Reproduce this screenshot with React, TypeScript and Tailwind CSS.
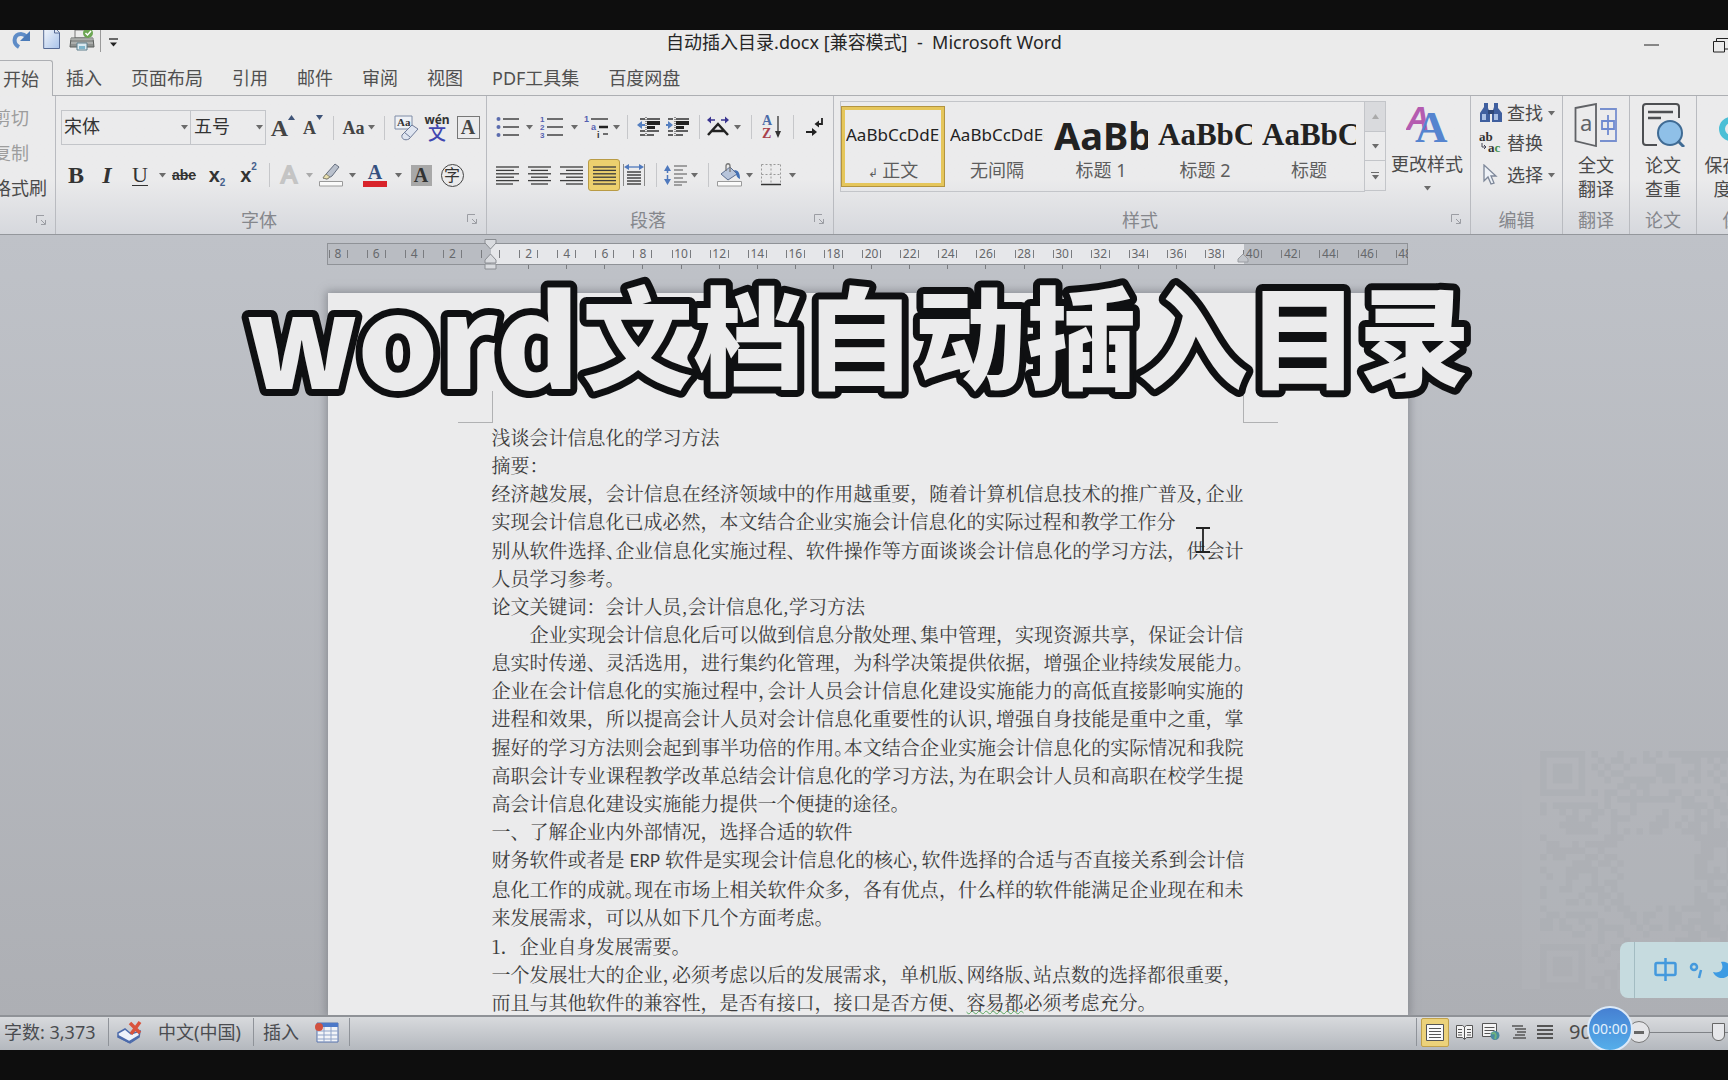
import type { ReactNode } from 'react';
import clsx from 'clsx';

const tabs = ['插入', '页面布局', '引用', '邮件', '审阅', '视图', 'PDF工具集', '百度网盘'];

// "~" marks a punctuation mark that is set at half width
const paragraphs: { text: string; full?: boolean }[][] = [
  [{ text: '浅谈会计信息化的学习方法' }],
  [{ text: '摘要：' }],
  [
    { text: '经济越发展，会计信息在经济领域中的作用越重要，随着计算机信息技术的推广普及~，企业', full: true },
    { text: '实现会计信息化已成必然，本文结合企业实施会计信息化的实际过程和教学工作分' },
  ],
  [
    { text: '别从软件选择~、企业信息化实施过程、软件操作等方面谈谈会计信息化的学习方法，供会计', full: true },
    { text: '人员学习参考。' },
  ],
  [{ text: '论文关键词：会计人员,会计信息化,学习方法' }],
  [
    { text: '　　企业实现会计信息化后可以做到信息分散处理~、集中管理，实现资源共享，保证会计信', full: true },
    { text: '息实时传递、灵活选用，进行集约化管理，为科学决策提供依据，增强企业持续发展能力~。', full: true },
    { text: '企业在会计信息化的实施过程中~，会计人员会计信息化建设实施能力的高低直接影响实施的', full: true },
    { text: '进程和效果，所以提高会计人员对会计信息化重要性的认识~，增强自身技能是重中之重，掌', full: true },
    { text: '握好的学习方法则会起到事半功倍的作用~。本文结合企业实施会计信息化的实际情况和我院', full: true },
    { text: '高职会计专业课程教学改革总结会计信息化的学习方法~，为在职会计人员和高职在校学生提', full: true },
    { text: '高会计信息化建设实施能力提供一个便捷的途径。' },
  ],
  [{ text: '一、了解企业内外部情况，选择合适的软件' }],
  [
    { text: '财务软件或者是 =ERP= 软件是实现会计信息化的核心~，软件选择的合适与否直接关系到会计信', full: true },
    { text: '息化工作的成就~。现在市场上相关软件众多，各有优点，什么样的软件能满足企业现在和未', full: true },
    { text: '来发展需求，可以从如下几个方面考虑。' },
  ],
  [{ text: '1．企业自身发展需要。' }],
  [
    { text: '一个发展壮大的企业~，必须考虑以后的发展需求，单机版~、网络版~、站点数的选择都很重要，' },
    { text: '而且与其他软件的兼容性，是否有接口，接口是否方便、_容易都_必须考虑充分。' },
  ],
];

const rulerLabels = [8, 6, 4, 2, 0, ...Array.from({ length: 24 }, (_, i) => (i + 1) * 2)];

function Line({ text, full }: { text: string; full?: boolean }) {
  const parts = text.split(/(~.|_.+?_|=.+?=)/);
  return (
    <span className={clsx('block whitespace-pre', full && '[text-align-last:justify]')}>
      {parts.map((part, i) => {
        if (part.startsWith('~')) {
          return (
            <span key={i} className="[font-feature-settings:'halt']">
              {part.slice(1)}
            </span>
          );
        }
        if (part.startsWith('_')) {
          return (
            <span key={i} className="underline decoration-[#5aa860] decoration-wavy decoration-1 underline-offset-0">
              {part.slice(1, -1)}
            </span>
          );
        }
        if (part.startsWith('=')) {
          return (
            <span key={i} className="font-['Lato',sans-serif] text-[17px]">
              {part.slice(1, -1)}
            </span>
          );
        }
        return part;
      })}
    </span>
  );
}

function Arrow({ className = 'w-3' }: { className?: string }) {
  return (
    <span className={clsx('flex shrink-0 justify-center', className)}>
      <svg width="7" height="5" viewBox="0 0 7 5">
        <path d="M0 0h7L3.5 4.5z" fill="#6b6b6b" />
      </svg>
    </span>
  );
}

function Sep({ className }: { className: string }) {
  return (
    <span className={clsx('flex shrink-0 justify-center', className)}>
      <span className="h-6 w-px bg-[#c6c7ca]" />
    </span>
  );
}

function Tool({ label, className, children }: { label: string; className: string; children: ReactNode }) {
  return (
    <button type="button" aria-label={label} className={clsx('flex h-8 shrink-0 items-center justify-center', className)}>
      {children}
    </button>
  );
}

function Group({
  title,
  className,
  launcher,
  children,
}: {
  title: string;
  className: string;
  launcher?: boolean;
  children: ReactNode;
}) {
  return (
    <section className={clsx('flex shrink-0 flex-col border-r border-[#b9bbc0]', className)}>
      <div className="h-[111px]">{children}</div>
      <div
        className={clsx('relative h-7 text-center leading-7 whitespace-nowrap text-[#85878c]', launcher && 'pr-6')}
      >
        {title}
        {launcher && (
          <svg className="absolute top-2 right-2" width="11" height="11" viewBox="0 0 11 11" fill="none" stroke="#9b9da3">
            <path d="M.5 8V.5H8M5 5l4 4M9.500 5v4.500H5" />
          </svg>
        )}
      </div>
    </section>
  );
}

function Lines({ rows, width = 23 }: { rows: [number, number][]; width?: number }) {
  return (
    <svg width={width} height="19" viewBox={`0 0 ${width} 19`} stroke="#3c3c3c" strokeWidth="1.300">
      {rows.map(([x1, x2], i) => (
        <path key={i} d={`M${x1} ${1 + i * 3.4}H${x2}`} />
      ))}
    </svg>
  );
}

function TitleBar() {
  return (
    <header className="relative flex h-[30px] shrink-0 items-start">
      <div className="flex flex-1 items-start">
        <button type="button" aria-label="恢复" className="ml-3">
          <svg width="20" height="20" viewBox="0 0 20 20">
            <path d="M7 17C0 13 2 4 9 4c3 0 4 1 6 3" fill="none" stroke="#5e8cc7" strokeWidth="4" />
            <path d="M18 1v10H8z" fill="#4a7ab8" />
          </svg>
        </button>
        <button type="button" aria-label="新建" className="ml-[11px]">
          <svg width="18" height="20" viewBox="0 0 18 20">
            <defs>
              <linearGradient id="sheet" x1="0" y1="0" x2="1" y2="1">
                <stop offset="0" stopColor="#f4f7fb" />
                <stop offset="1" stopColor="#a9c3ea" />
              </linearGradient>
            </defs>
            <path d="M.7-2H12l4.500 4.500V18.500H.7z" fill="url(#sheet)" stroke="#566a94" />
            <path d="M11.500-2v5h5" fill="#dfe6f2" stroke="#566a94" />
          </svg>
        </button>
        <button type="button" aria-label="快速打印" className="ml-2">
          <svg width="26" height="21" viewBox="0 0 26 21">
            <path d="M6 0h13v8H6z" fill="#ececec" stroke="#777" />
            <path d="M2 8h22l1 9H1z" fill="#8e918f" stroke="#5b5e5c" />
            <path d="M1 9h24M2 13h22" stroke="#c7cac8" />
            <path d="M8 13h10v7H8z" fill="#dceaf0" stroke="#5f7f8c" />
            <path d="M10 16h6v3h-6z" fill="#7fb6cc" />
            <circle cx="19" cy="3" r="5" fill="#6ca653" />
            <path d="M16.500 3l2 2 3.500-4" fill="none" stroke="#fff" strokeWidth="1.500" />
          </svg>
        </button>
        <span className="ml-[5px] h-[22px] w-px bg-[#9a9a9a]" />
        <button type="button" aria-label="自定义快速访问工具栏" className="mt-2 ml-2">
          <svg width="9" height="9" viewBox="0 0 9 9">
            <path d="M0 1h9" stroke="#222" strokeWidth="1.300" />
            <path d="M1 4.500h7L4.500 8.500z" fill="#222" />
          </svg>
        </button>
      </div>
      <h1 className="text-lg leading-6 whitespace-pre text-[#262626]">自动插入目录.docx [兼容模式]  -  Microsoft Word</h1>
      <div className="flex flex-1 justify-end overflow-hidden">
        <button type="button" aria-label="最小化" className="mr-[54px] h-[30px]">
          <svg width="15" height="2" viewBox="0 0 15 2">
            <path d="M0 1h15" stroke="#222" />
          </svg>
        </button>
        <button type="button" aria-label="还原" className="h-[30px] w-[15px]">
          <svg width="15" height="16" viewBox="0 0 15 16" fill="none" stroke="#222">
            <path d="M.5 4.500h11v10.500H.5zM3.500 4.500V1.500H16M11.500 12h4" />
          </svg>
        </button>
      </div>
    </header>
  );
}

function TabBar() {
  return (
    <nav className="flex h-9 shrink-0 text-lg leading-9 text-[#505050]">
      <button type="button" className="w-[53px] rounded-tr-[3px] border-t border-r border-[#adafb3] pl-[3px] text-left">
        开始
      </button>
      <div className="flex flex-1 gap-[29px] border-b border-[#adafb3] pl-[13px]">
        {tabs.map((tab) => (
          <button key={tab} type="button" className="whitespace-nowrap">
            {tab}
          </button>
        ))}
      </div>
    </nav>
  );
}

function FontGroup() {
  return (
    <Group title="字体" className="w-[431px]" launcher>
      <div className="flex items-center pt-[14px] pl-[5px]">
        <div className="flex h-[35px] items-center border border-[#c3c5c9]">
          <select aria-label="字体" className="h-full w-[116px] appearance-none bg-transparent pb-[3px] pl-[2px] text-lg text-[#333]">
            <option>宋体</option>
          </select>
          <Arrow />
        </div>
        <div className="flex h-[35px] items-center border border-l-0 border-[#c3c5c9]">
          <select aria-label="字号" className="h-full w-[62px] appearance-none bg-transparent pb-[3px] pl-[3px] text-lg text-[#333]">
            <option>五号</option>
          </select>
          <Arrow />
        </div>
        <div className="flex items-center text-[#444]">
          <Tool label="增大字体" className="w-[34px] font-['Liberation_Serif'] text-2xl font-bold">
            A
            <svg className="mb-5" width="7" height="5" viewBox="0 0 7 5">
              <path d="M0 5h7L3.500 0z" fill="#3f5478" />
            </svg>
          </Tool>
          <Tool label="缩小字体" className="w-[26px] font-['Liberation_Serif'] text-lg font-bold">
            A
            <svg className="mb-5" width="7" height="5" viewBox="0 0 7 5">
              <path d="M0 0h7L3.500 5z" fill="#3f5478" />
            </svg>
          </Tool>
          <Sep className="w-[14px]" />
          <Tool label="更改大小写" className="w-[27px] font-['Liberation_Serif'] text-lg font-bold">
            Aa
          </Tool>
          <Arrow className="w-2" />
          <Sep className="w-[18px]" />
          <Tool label="清除格式" className="w-[26px]">
            <svg width="25" height="26" viewBox="0 0 25 26">
              <path d="M1 1h17v13H1z" fill="#eef1f6" stroke="#7f8ca6" />
              <text x="3" y="11" fontSize="11" fontFamily="Liberation Serif" fontWeight="700" fill="#333">
                Aa
              </text>
              <path d="M8 20l10-10 6 4-9 10c-4 2-8 0-7-4z" fill="#dfe5f0" stroke="#6d7a98" />
              <path d="M10 17l6 5" stroke="#6d7a98" />
            </svg>
          </Tool>
          <Tool label="拼音指南" className="w-9 flex-col">
            <span className="text-xs leading-[10px] font-bold text-[#333]">wén</span>
            <span className="text-lg leading-4 font-medium text-[#4046b0]">文</span>
          </Tool>
          <Tool label="字符边框" className="w-[26px]">
            <span className="size-[23px] border border-[#777] text-center font-['Liberation_Serif'] text-xl leading-[21px] font-bold">
              A
            </span>
          </Tool>
        </div>
      </div>
      <div className="flex items-center pt-[14px] pl-[5px] text-[#333]">
        <Tool label="加粗" className="w-[30px] font-['Liberation_Serif'] text-2xl font-bold">
          B
        </Tool>
        <Tool label="倾斜" className="w-8 font-['Liberation_Serif'] text-2xl font-bold italic">
          I
        </Tool>
        <Tool label="下划线" className="w-[34px] font-['Liberation_Serif'] text-[22px]">
          <span className="border-b border-[#333] leading-5">U</span>
        </Tool>
        <Arrow className="w-[10px]" />
        <Tool label="删除线" className="w-[34px] font-['Liberation_Sans'] text-sm font-bold line-through">
          abe
        </Tool>
        <Tool label="下标" className="w-8 font-['Liberation_Sans'] text-xl font-bold">
          x<span className="mt-4 text-[10px] text-[#44608c]">2</span>
        </Tool>
        <Tool label="上标" className="w-[31px] font-['Liberation_Sans'] text-xl font-bold">
          x<span className="mb-4 text-[10px] text-[#44608c]">2</span>
        </Tool>
        <Sep className="w-[10px]" />
        <Tool
          label="文本效果"
          className="w-[30px] font-['Liberation_Sans'] text-2xl text-[#ededed] [-webkit-text-stroke:2px_#c4c4c4]"
        >
          A
        </Tool>
        <Arrow className="w-[10px] opacity-50" />
        <Tool label="突出显示" className="w-[33px]">
          <svg width="24" height="24" viewBox="0 0 24 24">
            <path d="M4 15l4-5 8-9 4 3-7 9-5 3z" fill="#b9c0cc" stroke="#666f7f" />
            <path d="M4 15l3-4 4 3-3 2z" fill="#e9dfae" stroke="#8d8a74" />
            <path d="M.5 18.500h23v4.500H.5z" fill="#fafafa" stroke="#9a9a9a" />
          </svg>
        </Tool>
        <Arrow className="w-[10px]" />
        <Tool label="字体颜色" className="w-9 flex-col">
          <span className="font-['Liberation_Serif'] text-xl leading-[18px] font-bold text-[#35507f]">A</span>
          <span className="h-[6px] w-6 bg-[#d8232a]" />
        </Tool>
        <Arrow className="w-[10px]" />
        <Tool label="字符底纹" className="w-9">
          <span className="size-[21px] bg-[#a8a8a8] text-center font-['Liberation_Serif'] text-xl leading-[21px] font-bold">A</span>
        </Tool>
        <Tool label="带圈字符" className="w-[26px]">
          <span className="size-[23px] rounded-full border border-[#444] text-center text-base leading-5">字</span>
        </Tool>
      </div>
    </Group>
  );
}

function ParagraphGroup() {
  return (
    <Group title="段落" className="w-[347px]" launcher>
      <div className="flex items-center pt-[15px] pl-1">
        <Tool label="项目符号" className="w-8">
          <svg width="23" height="22" viewBox="0 0 23 22">
            <path d="M7 3h16M7 11h16M7 19h16" stroke="#444" strokeWidth="1.300" />
            <g fill="#5b6cae">
              <circle cx="2.500" cy="3" r="2" />
              <circle cx="2.500" cy="11" r="2" />
              <circle cx="2.500" cy="19" r="2" />
            </g>
          </svg>
        </Tool>
        <Arrow />
        <Tool label="编号" className="w-[33px]">
          <svg width="23" height="24" viewBox="0 0 23 24">
            <path d="M7 4h16M7 12h16M7 20h16" stroke="#444" strokeWidth="1.300" />
            <g fontSize="8" fontWeight="700" fontFamily="Liberation Sans" fill="#5560b0">
              <text x="0" y="7">1</text>
              <text x="0" y="15">2</text>
              <text x="0" y="23">3</text>
            </g>
          </svg>
        </Tool>
        <Arrow />
        <Tool label="多级列表" className="w-8">
          <svg width="26" height="24" viewBox="0 0 26 24">
            <path d="M8 4h17M20 19h5" stroke="#444" strokeWidth="1.500" />
            <path d="M16 12h9" stroke="#222" strokeWidth="2.500" />
            <g fontSize="9" fontWeight="700" fontFamily="Liberation Sans" fill="#5560b0">
              <text x="1" y="7">1</text>
              <text x="8" y="15">a</text>
              <text x="14" y="23" fill="#333">i</text>
            </g>
          </svg>
        </Tool>
        <Arrow className="w-2" />
        <Sep className="w-[14px]" />
        <Tool label="减少缩进量" className="w-7">
          <svg width="23" height="22" viewBox="0 0 23 22">
            <path d="M3 3h5M10 3h13M3 15h5M3 19h5M10 15h12M10 19h7" stroke="#333" strokeWidth="1.300" />
            <path d="M10 5h13v4H10zM10 10h8v3h-8z" fill="#222" />
            <path d="M9 1v20" stroke="#333" strokeDasharray="1 1" />
            <path d="M0 9l5-4v8z" fill="#557fc0" />
            <path d="M4 9h4" stroke="#557fc0" strokeWidth="2" />
          </svg>
        </Tool>
        <Tool label="增加缩进量" className="w-[31px]">
          <svg width="23" height="22" viewBox="0 0 23 22">
            <path d="M2 3h5M10 3h13M2 15h5M2 19h5M10 15h12M10 19h7" stroke="#333" strokeWidth="1.300" />
            <path d="M10 5h13v4H10zM10 10h8v3h-8z" fill="#222" />
            <path d="M9 1v20" stroke="#333" strokeDasharray="1 1" />
            <path d="M7 9L2 5v8z" fill="#557fc0" />
            <path d="M0 9h4" stroke="#557fc0" strokeWidth="2" />
          </svg>
        </Tool>
        <Sep className="w-3" />
        <Tool label="中文版式" className="w-[26px]">
          <svg width="24" height="22" viewBox="0 0 24 22">
            <path d="M1 4l4-3.500v7zM23 4l-4-3.500v7z" fill="#3a3590" />
            <path d="M3 4h6M21 4h-6" stroke="#3a3590" strokeWidth="1.500" />
            <path d="M2 19L12 8l10 11M6 15h12" fill="none" stroke="#222" strokeWidth="2.500" />
          </svg>
        </Tool>
        <Arrow />
        <Sep className="w-4" />
        <Tool label="排序" className="w-[26px]">
          <svg width="20" height="24" viewBox="0 0 20 24">
            <g fontSize="14" fontWeight="700" fontFamily="Liberation Serif">
              <text x="0" y="10" fill="#4a6ba8">A</text>
              <text x="0" y="23" fill="#a8414b">Z</text>
            </g>
            <path d="M16 1v20" stroke="#333" strokeWidth="1.300" />
            <path d="M13 16h6l-3 7z" fill="#333" />
          </svg>
        </Tool>
        <Sep className="w-4" />
        <Tool label="显示编辑标记" className="w-7">
          <svg width="18" height="22" viewBox="0 0 18 22" fill="none" stroke="#222" strokeWidth="1.800">
            <path d="M16 2v6h-5M0 16h8" />
            <path d="M13 4.500v7L8.500 8zM6 12v8l5-4z" fill="#222" stroke="none" />
          </svg>
        </Tool>
      </div>
      <div className="flex items-center pt-4 pl-1">
        <Tool label="左对齐" className="w-8">
          <Lines rows={[[0, 23], [0, 18], [0, 23], [0, 18], [0, 23], [0, 17]]} />
        </Tool>
        <Tool label="居中" className="w-8">
          <Lines rows={[[0, 23], [3, 20], [0, 23], [3, 20], [0, 23], [3, 20]]} />
        </Tool>
        <Tool label="右对齐" className="w-[33px]">
          <Lines rows={[[0, 23], [6, 23], [0, 23], [6, 23], [0, 23], [6, 23]]} />
        </Tool>
        <Tool label="两端对齐" className="w-8 rounded-[3px] border border-[#b99b45] bg-[#ecd06e]">
          <Lines rows={[[0, 23], [0, 23], [0, 23], [0, 23], [0, 23], [0, 23]]} />
        </Tool>
        <Tool label="分散对齐" className="w-7">
          <svg width="22" height="24" viewBox="0 0 22 24">
            <path d="M.5 1v22M21.500 1v22" stroke="#888" />
            <path d="M4 9h14M4 12h14M4 15h14M4 18h14M4 21h14" stroke="#444" strokeWidth="1.300" />
            <path d="M4 4h14" stroke="#4f79bd" strokeWidth="1.300" />
            <path d="M1 4l5-3v6zM21 4l-5-3v6z" fill="#4f79bd" />
          </svg>
        </Tool>
        <Sep className="w-4" />
        <Tool label="行距" className="w-6">
          <svg width="24" height="22" viewBox="0 0 24 22">
            <path d="M10 2h13M10 6h9M10 10h13M10 14h9M10 18h13M10 21h8" stroke="#555" strokeWidth="1.200" />
            <path d="M0 7l3.500-6L7 7zM0 15l3.500 6L7 15z" fill="#4f79bd" />
            <path d="M3.500 5v12" stroke="#4f79bd" strokeWidth="1.500" strokeDasharray="4 2" />
          </svg>
        </Tool>
        <Arrow />
        <Sep className="w-4" />
        <Tool label="底纹" className="w-[26px]">
          <svg width="25" height="24" viewBox="0 0 25 24">
            <path d="M4 11l9-7 7 7-9 6z" fill="#b7c4da" stroke="#5c6e90" />
            <path d="M9 8V3c0-3 4-3 4 0v6" fill="none" stroke="#777" strokeWidth="1.300" />
            <path d="M17 7c5 0 6 4 6 9-3-1-4-4-4-6z" fill="#4270b5" />
            <path d="M.5 18.500h24v4.500H.5z" fill="#fafafa" stroke="#9a9a9a" />
          </svg>
        </Tool>
        <Arrow className="w-[14px]" />
        <Tool label="边框" className="w-[30px]">
          <svg width="20" height="22" viewBox="0 0 20 22">
            <path d="M.5.5h19M.5 10.500h19M.5.5v18M10 .5v18M19.500.5v18" stroke="#999" strokeDasharray="2 2" />
            <path d="M0 20.500h20" stroke="#333" strokeWidth="1.500" />
          </svg>
        </Tool>
        <Arrow />
      </div>
    </Group>
  );
}

function StylesGroup() {
  const item = 'flex w-[104px] shrink-0 flex-col items-center px-[5px] pt-[6px]';
  const sample = 'flex h-[46px] w-full items-center overflow-hidden whitespace-nowrap text-[#222]';
  return (
    <Group title="样式" className="w-[637px]" launcher>
      <div className="flex pt-[5px] pl-[6px]">
        <div className="flex h-[91px] w-[525px] border border-[#c3c5c9] py-1 text-[#5d5d5d]">
          <button
            type="button"
            className="flex w-[104px] shrink-0 flex-col items-center border-4 border-[#e5c65b] px-px pt-[2px] outline-1 -outline-offset-1 outline-[#b39440]"
          >
            <span className={clsx(sample, 'text-[17px]')}>AaBbCcDdEe</span>
            <span className="whitespace-nowrap">
              <span className="text-xs">↲</span> 正文
            </span>
          </button>
          <button type="button" className={item}>
            <span className={clsx(sample, 'text-[17px]')}>AaBbCcDdEe</span>
            <span>无间隔</span>
          </button>
          <button type="button" className={item}>
            <span className={clsx(sample, 'text-[38px] font-bold')}>AaBbC</span>
            <span>标题 1</span>
          </button>
          <button type="button" className={item}>
            <span className={clsx(sample, "font-['Liberation_Serif'] text-[31px] font-bold")}>AaBbCc</span>
            <span>标题 2</span>
          </button>
          <button type="button" className={item}>
            <span className={clsx(sample, "font-['Liberation_Serif'] text-[31px] font-bold")}>AaBbCc</span>
            <span>标题</span>
          </button>
        </div>
        <div className="flex h-[90px] w-[21px] flex-col divide-y divide-[#c3c5c9] border border-l-0 border-[#c3c5c9]">
          <button type="button" aria-label="上一行" className="flex flex-1 items-center justify-center bg-[#d9dadd]">
            <svg width="7" height="5" viewBox="0 0 7 5">
              <path d="M0 5h7L3.500 0z" fill="#aaa" />
            </svg>
          </button>
          <button type="button" aria-label="下一行" className="flex flex-1 items-center justify-center">
            <Arrow />
          </button>
          <button type="button" aria-label="其他" className="flex flex-1 flex-col items-center justify-center gap-[2px]">
            <span className="h-px w-2 bg-[#6b6b6b]" />
            <Arrow />
          </button>
        </div>
        <button type="button" className="ml-[5px] flex w-[72px] flex-col items-center pt-[3px] whitespace-nowrap">
          <svg width="42" height="40" viewBox="0 0 42 40" fontFamily="Liberation Serif" fontWeight="700">
            <text x="0" y="26" fontSize="33" fontFamily="Liberation Sans" fill="#b45cb0" fontStyle="italic">
              A
            </text>
            <text x="9" y="38" fontSize="45" fill="#5684cf">
              A
            </text>
          </svg>
          <span className="mt-2">更改样式</span>
          <Arrow className="w-3 pt-[10px]" />
        </button>
      </div>
    </Group>
  );
}

function EditGroup() {
  return (
    <Group title="编辑" className="w-[92px]">
      <div className="flex flex-col gap-[2px] pt-[3px] pl-2 whitespace-nowrap text-[#4a4a4a]">
        <button type="button" className="flex h-7 items-center">
          <svg className="mr-1 shrink-0" width="24" height="20" viewBox="0 0 24 20">
            <path d="M5 0h4v5l2 5v9H1v-9l4-6zM15 0h4v5l4 5v9H13v-9l2-6z" fill="#3f5f9f" />
            <path d="M3 11h4v6H3zM15 11h4v6h-4z" fill="#a9bfe4" />
            <path d="M9 7h6v4H9z" fill="#2f4879" />
          </svg>
          查找
          <Arrow className="w-4" />
        </button>
        <button type="button" className="flex h-7 items-center">
          <svg className="mr-1 shrink-0" width="24" height="24" viewBox="0 0 24 24" fontFamily="Liberation Serif" fontWeight="700">
            <text x="0" y="10" fontSize="13" fill="#333">ab</text>
            <text x="9" y="21" fontSize="13" fill="#333">
              a<tspan fill="#3f8f4a">c</tspan>
            </text>
            <path d="M3 12v4h4M5 14l2 2-2 2" fill="none" stroke="#445" />
          </svg>
          替换
        </button>
        <button type="button" className="flex h-8 items-center">
          <svg className="mr-1 shrink-0" width="24" height="22" viewBox="0 0 24 22">
            <path d="M5 1v16l4-4 3 7 3-1-3-7h5z" fill="#eef2f7" stroke="#7d8799" strokeWidth="1.300" />
          </svg>
          选择
          <Arrow className="w-4" />
        </button>
      </div>
    </Group>
  );
}

function BigTool({
  title,
  first,
  second,
  className,
  children,
}: {
  title: string;
  first: string;
  second: string;
  className: string;
  children: ReactNode;
}) {
  return (
    <Group title={title} className={className}>
      <button type="button" className="flex w-full flex-col items-center pt-[7px] leading-6 whitespace-nowrap text-[#4a4a4a]">
        {children}
        <span className="mt-[6px]">{first}</span>
        <span>{second}</span>
      </button>
    </Group>
  );
}

function Ribbon() {
  return (
    <div className="flex h-[139px] shrink-0 overflow-hidden border-b border-[#94979c] bg-linear-to-b from-[#ebebec] from-60% to-[#d6d8dd] text-lg leading-6 text-[#4a4a4a]">
      <section className="w-14 shrink-0 overflow-hidden border-r border-[#b9bbc0]">
        <div className="-ml-[7px] flex h-[111px] flex-col items-start gap-[11px] pt-[10px] whitespace-nowrap">
          <button type="button" className="text-[#9d9d9d]">剪切</button>
          <button type="button" className="text-[#9d9d9d]">复制</button>
          <button type="button">格式刷</button>
        </div>
        <div className="flex h-7 justify-end pt-2 pr-2">
          <svg width="11" height="11" viewBox="0 0 11 11" fill="none" stroke="#9b9da3">
            <path d="M.5 8V.5H8M5 5l4 4M9.500 5v4.500H5" />
          </svg>
        </div>
      </section>
      <FontGroup />
      <ParagraphGroup />
      <StylesGroup />
      <EditGroup />
      <BigTool title="翻译" first="全文" second="翻译" className="w-[67px]">
        <svg width="44" height="44" viewBox="0 0 44 44" fill="none">
          <path d="M1.500 5L22 1v42L1.500 38z" stroke="#606266" strokeWidth="1.800" />
          <path d="M26 6h16v32H26" stroke="#7890cf" strokeWidth="1.800" />
          <path d="M28 18h12v8H28zM34 12v20" stroke="#6f8ad0" strokeWidth="1.800" />
          <text x="6" y="28" fontSize="22" fontFamily="Noto Sans" fill="#606266">a</text>
        </svg>
      </BigTool>
      <BigTool title="论文" first="论文" second="查重" className="w-[67px]">
        <svg width="44" height="44" viewBox="0 0 44 44" fill="none">
          <path d="M16 42H5a3 3 0 0 1-3-3V4a3 3 0 0 1 3-3h30a3 3 0 0 1 3 3v11" stroke="#4d4f52" strokeWidth="2" />
          <path d="M7 9h25M7 15h13" stroke="#4d4f52" strokeWidth="2.500" />
          <circle cx="29" cy="30" r="12" fill="#8fc0e8" stroke="#3f6b94" strokeWidth="2" />
          <path d="M37 38l6 6" stroke="#3f6b94" strokeWidth="3" />
        </svg>
      </BigTool>
      <BigTool title="保存" first="保存到百" second="度网盘" className="w-[88px]">
        <svg width="44" height="44" viewBox="0 0 44 44" fill="none">
          <circle cx="12" cy="26" r="9" stroke="#4cbfd6" strokeWidth="6" />
          <circle cx="31" cy="26" r="9" stroke="#4a8fe0" strokeWidth="6" />
        </svg>
      </BigTool>
    </div>
  );
}

function Ruler() {
  return (
    <div className="mx-auto w-[1081px] shrink-0 overflow-hidden">
      <div className="flex h-[22px] border border-[#8f9297] bg-[linear-gradient(to_right,#b9bcc2_163px,#e6e7ea_163px,#e6e7ea_916px,#b9bcc2_916px)]">
        <div className="-ml-[9px] flex w-[1105px] shrink-0 items-center">
          {rulerLabels.map((label, i) => (
            <div key={i} className="flex flex-1 justify-center">
              <span className="flex h-2 w-[19px] items-center justify-center border-x border-[#7a7c80] text-xs leading-3 text-[#66686c]">
                {label > 0 && label}
              </span>
            </div>
          ))}
        </div>
      </div>
      <div className="-ml-2 flex h-1 w-[1105px]">
        {rulerLabels.map((_, i) => (
          <div key={i} className="flex flex-1 justify-center">
            {i > 4 && i < 24 && <span className="h-full w-px bg-[#7a7c80]" />}
          </div>
        ))}
      </div>
    </div>
  );
}

function IndentMarks() {
  return (
    <>
      <svg className="absolute -top-1 left-[157px]" width="13" height="32" viewBox="0 0 13 32" fill="#d9dbdf" stroke="#8a8d92">
        <path d="M1 .5h11V4L6.500 10 1 4zM6.500 15l5.500 6v3H1v-3zM1 25h11v5H1z" />
      </svg>
      <svg className="absolute top-[10px] right-[159px]" width="12" height="10" viewBox="0 0 12 10" fill="#c3c6cb" stroke="#9a9da2">
        <path d="M6 1l5 5v3H1V6z" />
      </svg>
    </>
  );
}

function DocumentPage() {
  return (
    <article className="relative mx-auto w-[1080px] shrink-0 bg-[#ebebec] px-[164px] pt-[98px] shadow-[0_0_8px_2px_rgba(110,114,120,0.6)]">
      <div className="-mx-[34px] flex h-8 justify-between">
        <span className="w-[35px] border-r border-b border-[#b0b1b3]" />
        <span className="w-[35px] border-b border-l border-[#b0b1b3]" />
      </div>
      <div className="flex h-[592px] flex-col justify-between pt-px font-['Noto_Serif_CJK_SC','Noto_Sans_CJK_SC',sans-serif] text-[19px] leading-[26px] text-[#3c3c3c]">
        {paragraphs.map((lines, i) => (
          <p key={i} className="contents">
            {lines.map((line) => (
              <Line key={line.text} {...line} />
            ))}
          </p>
        ))}
      </div>
    </article>
  );
}

// Faint code behind the desktop corner
function WatermarkCode() {
  const cells: string[] = [];
  for (let y = 0; y < 37; y++) {
    for (let x = 0; x < 30; x++) {
      const finder = x < 8 && (y < 8 || y > 28);
      const logo = x > 12 && x < 24 && y > 12 && y < 24;
      const n = Math.abs(Math.sin(x * 12.9898 + y * 78.233) * 43758.5453) % 1;
      if (!finder && !logo && n > 0.5) cells.push(`M${x} ${y}h1v1h-1z`);
    }
  }
  return (
    <div className="absolute top-[500px] right-0 w-[206px] bg-[#b5b7bb]/40 pt-4 pl-[18px]">
      <svg width="188" height="238" viewBox="0 0 29.200 37" fill="#a9acb1" opacity="0.4">
        <path d={cells.join('')} />
        {[0, 30].map((y) => (
          <path key={y} fillRule="evenodd" d={`M0 ${y}h7v7h-7zM1 ${y + 1}v5h5v-5zM2 ${y + 2}h3v3h-3z`} />
        ))}
      </svg>
    </div>
  );
}

function ImeBar() {
  return (
    <div className="absolute right-0 bottom-[17px] flex h-14 w-[108px] items-center rounded-l-lg bg-[#c6dbdf]">
      <span className="ml-[14px] h-full w-px bg-[#a3bcc2]" />
      <svg className="ml-[19px]" width="74" height="24" viewBox="0 0 74 24" fill="none" stroke="#4499dd" strokeWidth="2.500">
        <rect x="1.500" y="5" width="20" height="12" rx="1.500" />
        <path d="M11.500 0v23" />
        <circle cx="40" cy="9" r="3" />
        <path d="M47 12l-2 8" />
        <path d="M67 4c4 7-1 12-8 10 4 9 17 8 18-3 0-4-4-8-10-7z" fill="#3d9be3" stroke="none" />
      </svg>
    </div>
  );
}

// Outlined title lettering
function Headline() {
  return (
    <h2 className="absolute top-[34px] left-[230px]">
      <svg
        width="1270"
        height="150"
        viewBox="0 0 1270 150"
        className="font-['Noto_Sans_CJK_SC',sans-serif]"
        fill="#ebebec"
        stroke="#0f1012"
        strokeWidth="14"
        strokeLinejoin="round"
        paintOrder="stroke"
      >
        <text x="15" y="120" fontSize="127" fontWeight="900">
          word
        </text>
        <text x="352" y="112" fontSize="111" fontWeight="900">
          文档自动插入目录
        </text>
      </svg>
    </h2>
  );
}

function StatusBar() {
  const divider = 'h-7 w-px bg-[#8f9399]';
  return (
    <footer className="relative flex h-[35px] shrink-0 items-center border-t-2 border-[#8f9297] bg-linear-to-b from-[#d8dadd] to-[#b4b8be] pb-[3px] text-lg text-[#4a4c50]">
      <button type="button" className="ml-1 w-[104px] text-left whitespace-nowrap">字数: 3,373</button>
      <span className={divider} />
      <button type="button" aria-label="校对" className="ml-2">
        <svg width="25" height="24" viewBox="0 0 25 24">
          <path d="M1 13l7-4 6 5 9-3-1 6-9 6-12-6z" fill="#eef2fa" stroke="#4c6bab" strokeWidth="1.500" />
          <path d="M1 16l11 6 10-6" fill="none" stroke="#4c6bab" strokeWidth="2" />
          <path d="M13 3l10 10M23 2L14 14" stroke="#d9533c" strokeWidth="3.500" />
        </svg>
      </button>
      <button type="button" className="ml-4 w-[95px] text-left whitespace-nowrap">中文(中国)</button>
      <span className={divider} />
      <button type="button" className="ml-[9px]">插入</button>
      <button type="button" aria-label="录制宏" className="ml-4">
        <svg width="24" height="21" viewBox="0 0 24 21">
          <path d="M2 1h21v19H2z" fill="#f2f4f8" stroke="#5673ad" />
          <path d="M2 1h21v4H2z" fill="#4c78c8" />
          <path d="M2 9h21M2 13h21M2 17h21M9 5v15M16 5v15" stroke="#8fa3c8" />
          <circle cx="4" cy="5" r="4" fill="#d2513f" />
        </svg>
      </button>
      <span className="ml-[10px] h-7 w-px bg-[#8f9399]" />

      <div className="ml-auto flex h-full items-center text-[#4a4a4a]">
        <span className={divider} />
        <button
          type="button"
          aria-label="页面视图"
          className="ml-1 flex h-[29px] w-7 items-center justify-center rounded-[2px] border border-[#c2a24b] bg-[#ecd27a]"
        >
          <svg width="18" height="17" viewBox="0 0 18 17" stroke="#555">
            <path d="M.5.5h17v16H.5z" fill="#fafafa" />
            <path d="M3 4.500h12M3 7.500h12M3 10.500h12M3 13.500h12" />
          </svg>
        </button>
        <button type="button" aria-label="阅读版式" className="ml-[7px]">
          <svg width="17" height="17" viewBox="0 0 17 17" fill="#f4f4f4" stroke="#555">
            <path d="M.5 1.500h6l2 1.500 2-1.500h6v12h-6l-2 2-2-2h-6zM8.500 3v12M2 5.500h4M2 8.500h4M2 11h4M11 5.500h4M11 8.500h4M11 11h4" />
          </svg>
        </button>
        <button type="button" aria-label="Web 版式" className="ml-[9px]">
          <svg width="18" height="18" viewBox="0 0 18 18">
            <path d="M.5.5h14v13H.5z" fill="#f4f4f4" stroke="#555" />
            <path d="M2.500 4.500h10M2.500 7.500h10M2.500 10.500h6" stroke="#555" />
            <circle cx="13" cy="12.500" r="4.500" fill="#4a8aa0" />
            <path d="M10 11c3-3 5 1 3 5" stroke="#6fb37c" strokeWidth="2" fill="none" />
          </svg>
        </button>
        <button type="button" aria-label="大纲视图" className="ml-[11px]">
          <svg width="16" height="15" viewBox="0 0 16 15" stroke="#555" strokeWidth="1.500">
            <path d="M1 1h11M4 4h11M6 7h9M4 10h10M2 13h13" />
          </svg>
        </button>
        <button type="button" aria-label="草稿" className="ml-[10px]">
          <svg width="16" height="15" viewBox="0 0 16 15" stroke="#555" strokeWidth="2">
            <path d="M0 1h16M0 5h16M0 9h16M0 13h16" />
          </svg>
        </button>
        <button type="button" className="ml-4 w-[59px] text-left text-xl">90%</button>
        <button
          type="button"
          aria-label="缩小"
          className="flex size-[22px] items-center justify-center rounded-full border border-[#777] bg-[#e4e5e8]"
        >
          <span className="h-[3px] w-[10px] bg-[#666]" />
        </button>
        <input
          type="range"
          aria-label="显示比例"
          defaultValue={95}
          className="h-5 w-[78px] appearance-none bg-[linear-gradient(#7f8287,#7f8287)] bg-[length:100%_1px] bg-center bg-no-repeat [&::-webkit-slider-thumb]:h-[18px] [&::-webkit-slider-thumb]:w-[13px] [&::-webkit-slider-thumb]:appearance-none [&::-webkit-slider-thumb]:rounded-b-md [&::-webkit-slider-thumb]:border [&::-webkit-slider-thumb]:border-[#666] [&::-webkit-slider-thumb]:bg-[#e6e7ea]"
        />
      </div>

      {/* Recorder badge */}
      <div className="absolute right-[95px] -bottom-[2px] flex size-[46px] items-center justify-center rounded-full border-2 border-[#dbe9f8] bg-linear-to-b from-[#4680d2] to-[#55aeea] text-sm text-[#e4f1fc]">
        00:00
      </div>
    </footer>
  );
}

export default function App() {
  return (
    <div className="flex h-screen flex-col overflow-hidden border-y-[30px] border-[#0e0e0e] bg-[#ebebeb] font-['Noto_Sans','Noto_Sans_CJK_SC',sans-serif]">
      <TitleBar />
      <TabBar />
      <Ribbon />
      <main className="relative flex flex-1 flex-col overflow-hidden bg-linear-to-b from-[#bfc2c8] to-[#adafb4] pt-2 pl-[7px]">
        <div className="relative mx-auto mb-6 w-[1081px]">
          <Ruler />
          <IndentMarks />
        </div>
        <DocumentPage />
        <WatermarkCode />
        <ImeBar />
        <svg className="absolute top-[292px] left-[1196px]" width="14" height="26" viewBox="0 0 14 26" stroke="#222" strokeWidth="1.800">
          <path d="M0 1h14M7 1v24M0 25h14" />
        </svg>
        <Headline />
      </main>
      <StatusBar />
    </div>
  );
}
